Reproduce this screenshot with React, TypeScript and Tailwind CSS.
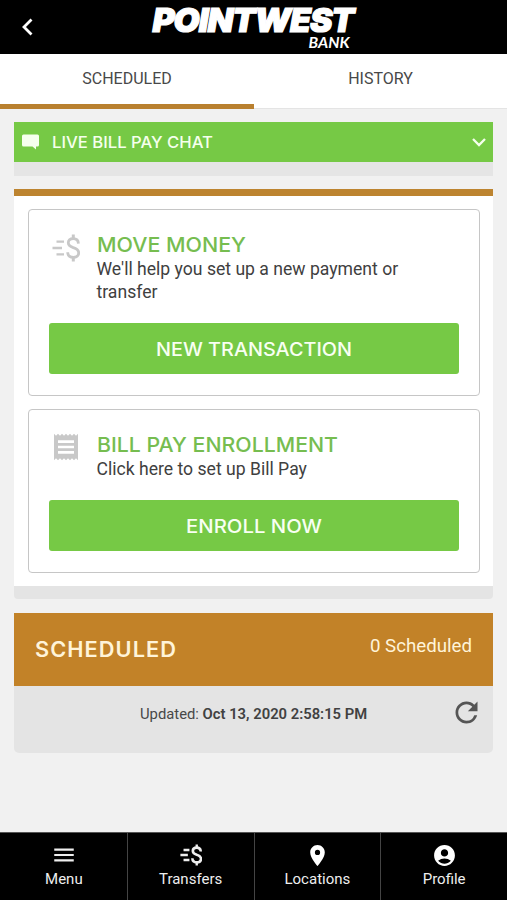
import type { ReactNode } from 'react';
import { MdAccountCircle, MdLocationOn, MdMenu, MdReceipt, MdRefresh } from 'react-icons/md';

function TransferIcon({ className, bold = false }: { className: string; bold?: boolean }) {
  return (
    <svg viewBox="0 0 28 28" className={className} fill="none" stroke="currentColor" strokeWidth={bold ? 3 : 2.3}>
      <path d="M4.5 7.6H12M.5 14H10M4.5 20.4H12" />
      <path d="M26.4 9.6C26.3 6.4 24.4 4.6 21.3 4.6c-3 0-5 1.6-5 4.2 0 2.8 2.2 3.9 5 4.8 3.4 1 5.4 2.2 5.4 5.2 0 2.8-2.2 4.6-5.4 4.6-3.4 0-5.500-1.900-5.600-5.200" strokeWidth={bold ? 3.3 : 2.8} />
      <path d="M21.300.5V5M21.300 23V27.500" strokeWidth="3" />
    </svg>
  );
}

function Logo() {
  return (
    <div className="flex flex-col italic">
      <svg width="208" height="35" viewBox="0 0 208 35" className="overflow-visible fill-white stroke-white font-['Inter',sans-serif] tracking-[-1px]">
        <text x="1.500" y="32.300" fontSize="32.500" fontWeight="900" strokeWidth="1.200" textLength="201" lengthAdjust="spacingAndGlyphs">POINTWEST</text>
      </svg>
      <svg width="208" height="18" viewBox="0 0 208 18" className="overflow-visible fill-white font-['Lato',sans-serif]">
        <text x="157.500" y="12.800" fontSize="14.800" fontWeight="700" textLength="41" lengthAdjust="spacingAndGlyphs">BANK</text>
      </svg>
    </div>
  );
}

/* Wide geometric capitals used by every heading and button label. */
function Wide({ text, width, size, className }: { text: string; width: number; size: number; className: string }) {
  return (
    <svg width={width} height={size} className={`block overflow-visible fill-current font-['Inter',sans-serif] ${className}`}>
      <text x="0" y={size * 0.88} fontSize={size} textLength={width} lengthAdjust="spacingAndGlyphs">{text}</text>
    </svg>
  );
}

function Card({ icon, title, titleWidth, body, action, actionWidth, className }: {
  icon: ReactNode; title: string; titleWidth: number; body: string; action: string; actionWidth: number; className: string;
}) {
  return (
    <section className={`flex flex-col justify-between rounded border border-[#c6c6c6] px-[20px] pt-[24px] pb-[21px] ${className}`}>
      <div className="flex">
        <div className="w-[48px] shrink-0">{icon}</div>
        <div>
          <h2><Wide text={title} width={titleWidth} size={20} className="font-medium text-[#76bd50]" /></h2>
          <p className="mt-[3.500px] -ml-[0.5px] w-[310px] text-[17.600px] leading-[23px] text-[#404040]">{body}</p>
        </div>
      </div>
      <button className="flex h-[51px] items-center justify-center rounded-[3px] bg-[#76c945] pt-[1px] text-[#f8fff2]">
        <Wide text={action} width={actionWidth} size={18.5} className="font-medium" />
      </button>
    </section>
  );
}

function NavItem({ icon, label }: { icon: ReactNode; label: string }) {
  return (
    <a className="flex flex-1 flex-col items-center border-l border-[#444] pt-[10px] first:border-l-0">
      <span className="flex h-[24px] items-center">{icon}</span>
      <span className="mt-[3px] text-[15px] leading-[18px]">{label}</span>
    </a>
  );
}

export default function App() {
  return (
    <div className="flex h-[900px] w-[507px] flex-col overflow-hidden bg-[#f1f1f1] font-['Roboto',sans-serif]">
      <header className="grid h-[54px] shrink-0 grid-cols-[151px_208px_1fr] bg-black text-white">
        <svg viewBox="0 0 12 18" className="mt-[18px] ml-[21px] h-[18px] w-[12px]" fill="none" stroke="currentColor" strokeWidth="2.800">
          <path d="M10.500 1.500 3 9l7.500 7.500" />
        </svg>
        <Logo />
      </header>

      <nav className="flex h-[55px] shrink-0 border-b border-[#e4e4e4] bg-white text-[16px] leading-[50px] text-[#484848]">
        <div className="h-[55px] w-[254px] border-b-[5px] border-[#b9802f] text-center">SCHEDULED</div>
        <div className="flex-1 text-center">HISTORY</div>
      </nav>

      <main className="flex-1 px-[14px] pt-[13px]">
        <section className="h-[54px] bg-[#e5e5e5]">
          <div className="flex h-[40px] items-center bg-[#76c945] text-[#f5ffed]">
            <svg viewBox="0 0 18 16" className="ml-[8px] h-[16px] w-[18px] fill-current">
              <path d="M1.500.5h14a1.500 1.500 0 0 1 1.500 1.500v9a1.500 1.500 0 0 1-1.500 1.500H14V15.500L10.500 12.500h-9A1.500 1.500 0 0 1 0 11V2A1.500 1.500 0 0 1 1.500.5Z" />
            </svg>
            <div className="ml-[12px] flex-1"><Wide text="LIVE BILL PAY CHAT" width={161} size={16} className="font-medium" /></div>
            <svg viewBox="0 0 14 9" className="mr-[7px] h-[9px] w-[14px]" fill="none" stroke="currentColor" strokeWidth="2.300">
              <path d="m1 1 6 6 6-6" />
            </svg>
          </div>
        </section>

        <section className="mt-[13px] h-[410px] rounded-b-[4px] bg-[#e4e4e4]">
          <div className="h-[397px] border-t-[7px] border-[#bd8430] bg-white pt-[13px] pr-[13px] pl-[14px]">
            <Card
              icon={<TransferIcon className="ml-[3px] size-[28px] text-[#c8c8c8]" />}
              title="MOVE MONEY" titleWidth={149} body="We'll help you set up a new payment or transfer"
              action="NEW TRANSACTION" actionWidth={196} className="h-[187px]"
            />
            <Card
              icon={<MdReceipt className="-mt-[3px] ml-[1px] size-[32px] text-[#c8c8c8]" />}
              title="BILL PAY ENROLLMENT" titleWidth={241} body="Click here to set up Bill Pay"
              action="ENROLL NOW" actionWidth={136} className="mt-[13px] h-[164px]"
            />
          </div>
        </section>

        <section className="mt-[14px] h-[140px] rounded-b-[5px] bg-[#e4e4e4]">
          <div className="flex h-[73px] justify-between bg-[#c28228] px-[21px] text-[#fff4d9]">
            <div className="pt-[25.500px]"><Wide text="SCHEDULED" width={142} size={21} className="font-semibold tracking-[1px]" /></div>
            <div className="pt-[20px] text-[18.700px] leading-[26px]">0 Scheduled</div>
          </div>
          <div className="flex">
            <p className="w-[440px] pl-[126px] pt-[18px] text-[14.800px] leading-[20px] whitespace-nowrap text-[#484848]">
              Updated: <b className="font-semibold text-[#414141]">Oct 13, 2020 2:58:15 PM</b>
            </p>
            <MdRefresh className="mt-[10px] -ml-[4px] size-[33px] shrink-0 text-[#555]" />
          </div>
        </section>
      </main>

      <footer className="flex h-[68px] shrink-0 border-t border-[#555] bg-black pl-[1px] text-[#eee]">
        <NavItem label="Menu" icon={<MdMenu className="size-[26px]" />} />
        <NavItem label="Transfers" icon={<TransferIcon bold className="size-[22px]" />} />
        <NavItem label="Locations" icon={<MdLocationOn className="size-[25px] text-white" />} />
        <NavItem label="Profile" icon={<MdAccountCircle className="size-[25px] text-white" />} />
      </footer>
    </div>
  );
}
